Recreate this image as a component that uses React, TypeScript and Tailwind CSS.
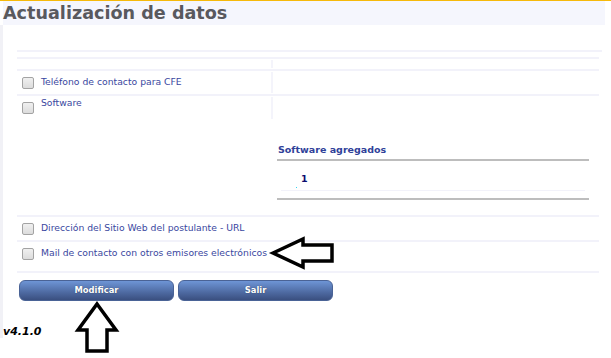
import React from "react";

const LINE = "bg-[#f2f2fa]";

function Checkbox({ className = "" }: { className?: string }) {
  return (
    <span
      className={`block w-[12px] h-[12px] shrink-0 rounded-[2px] border border-[#a3a3a3] bg-gradient-to-b from-[#f0f0f0] to-[#dcdcdc] ${className}`}
    />
  );
}

function Label({ children }: { children: React.ReactNode }) {
  return (
    <span className="text-[9.25px] leading-[12px] text-[#3a47a0] whitespace-nowrap">
      {children}
    </span>
  );
}

function Row({
  height,
  children,
  right,
  divider = true,
}: {
  height: string;
  children?: React.ReactNode;
  right?: React.ReactNode;
  divider?: boolean;
}) {
  return (
    <div className={`flex flex-col w-[582px] ${height}`}>
      <div className={`h-[2px] w-full ${LINE}`} />
      <div className="flex flex-1">
        <div className="w-[254px] shrink-0">{children}</div>
        <div className="flex flex-col">
          {divider && <div className="w-[2px] h-full my-[1px] bg-[#f4f4fb]" />}
        </div>
        <div className="flex-1">{right}</div>
      </div>
    </div>
  );
}

export default function App() {
  return (
    <div
      className="relative w-[611px] h-[358px] overflow-hidden bg-white flex flex-col"
      style={{ fontFamily: '"DejaVu Sans", Verdana, sans-serif' }}
    >
      <div className="h-px w-full bg-[#f6b90a]" />
      <div className="ml-[3px] w-[602px] h-[24px] bg-[#f5f6fd]">
        <h1 className="text-[17.6px] leading-[24px] font-bold text-[#59595e] whitespace-nowrap">
          Actualización de datos
        </h1>
      </div>

      <div className="flex">
        <div className="w-[3px] h-[313px] bg-[#f1f1f6] shrink-0" />
        <div className="flex flex-col">
          <div className="ml-[14px] flex flex-col">
            <div className={`mt-[25px] h-[2px] w-[585px] ${LINE}`} />
            <div className="mt-[5px]" />
            <Row height="h-[12px]" />
            <Row height="h-[25px]">
              <div className="flex items-start pt-[5px] pl-[5px] gap-[7px]">
                <Checkbox className="mt-[1px]" />
                <Label>Teléfono de contacto para CFE</Label>
              </div>
            </Row>
            <div className="flex flex-col w-[582px] h-[121px]">
              <div className={`h-[2px] w-full ${LINE}`} />
              <div className="flex flex-1">
                <div className="w-[254px] shrink-0 flex items-start pt-[1px] pl-[5px] gap-[7px]">
                  <Checkbox className="mt-[5px]" />
                  <Label>Software</Label>
                </div>
                <div className="w-[2px] h-[22px] mt-[1px] bg-[#f4f4fb]" />
                <div className="flex-1 pl-[4px] pt-[48px] flex flex-col">
                  <div className="pl-[1px] text-[9.5px] leading-[12px] font-bold text-[#2f4199] whitespace-nowrap">
                    Software agregados
                  </div>
                  <div className="mt-[3px] h-[2px] w-[312px] bg-[#bdbdbd]" />
                  <div className="flex flex-col px-[4px] w-[312px]">
                    <div className="relative pt-[12px] pl-[20px] flex">
                      <span className="absolute left-[15px] top-[26px] w-[1px] h-[1px] bg-[#33d6f0]" />
                      <div className="text-[9.5px] leading-[12px] font-bold text-[#0c0c6e]">1</div>
                    </div>
                    <div className="mt-[5px] h-[1px] w-full bg-[#f2f2fa]" />
                    <div className="h-[7px]" />
                  </div>
                  <div className="h-[2px] w-[312px] bg-[#bdbdbd]" />
                </div>
              </div>
            </div>
            <Row height="h-[25px]" divider={false}>
              <div className="flex items-start pt-[5px] pl-[5px] gap-[7px]">
                <Checkbox className="mt-[1px]" />
                <Label>Dirección del Sitio Web del postulante - URL</Label>
              </div>
            </Row>
            <Row height="h-[31px]" divider={false}>
              <div className="flex items-start pt-[5px] pl-[5px] gap-[7px]">
                <Checkbox className="mt-[1px]" />
                <Label>Mail de contacto con otros emisores electrónicos</Label>
              </div>
            </Row>
            <div className={`h-[2px] w-[582px] ${LINE}`} />

            <div className="mt-[7px] ml-[2px] flex gap-[4px]">
              {["Modificar", "Salir"].map((t) => (
                <button
                  key={t}
                  className="w-[155px] h-[21px] rounded-[6px] border border-[#4a6396] bg-gradient-to-b from-[#6e95d6] to-[#3a4f80] text-white text-[8.4px] font-bold leading-[19px] [text-shadow:0_0_1px_rgba(0,0,0,0.5)]"
                >
                  {t}
                </button>
              ))}
            </div>
          </div>
        </div>
      </div>

      <div className="absolute left-[3px] top-[325px] text-[11px] leading-[14px] font-bold italic text-black">
        v4.1.0
      </div>

      <svg
        className="absolute left-0 top-0 pointer-events-none"
        width="611"
        height="358"
        viewBox="0 0 611 358"
      >
        <path
          d="M273 253 L303 239 L303 245 L332 245 L332 261 L303 261 L303 267 Z"
          fill="white"
          stroke="black"
          strokeWidth="3.5"
          strokeLinejoin="miter"
        />
        <path
          d="M97 304 L116 330 L107 330 L107 351 L87 351 L87 330 L78 330 Z"
          fill="white"
          stroke="black"
          strokeWidth="3.5"
          strokeLinejoin="miter"
        />
      </svg>
    </div>
  );
}
